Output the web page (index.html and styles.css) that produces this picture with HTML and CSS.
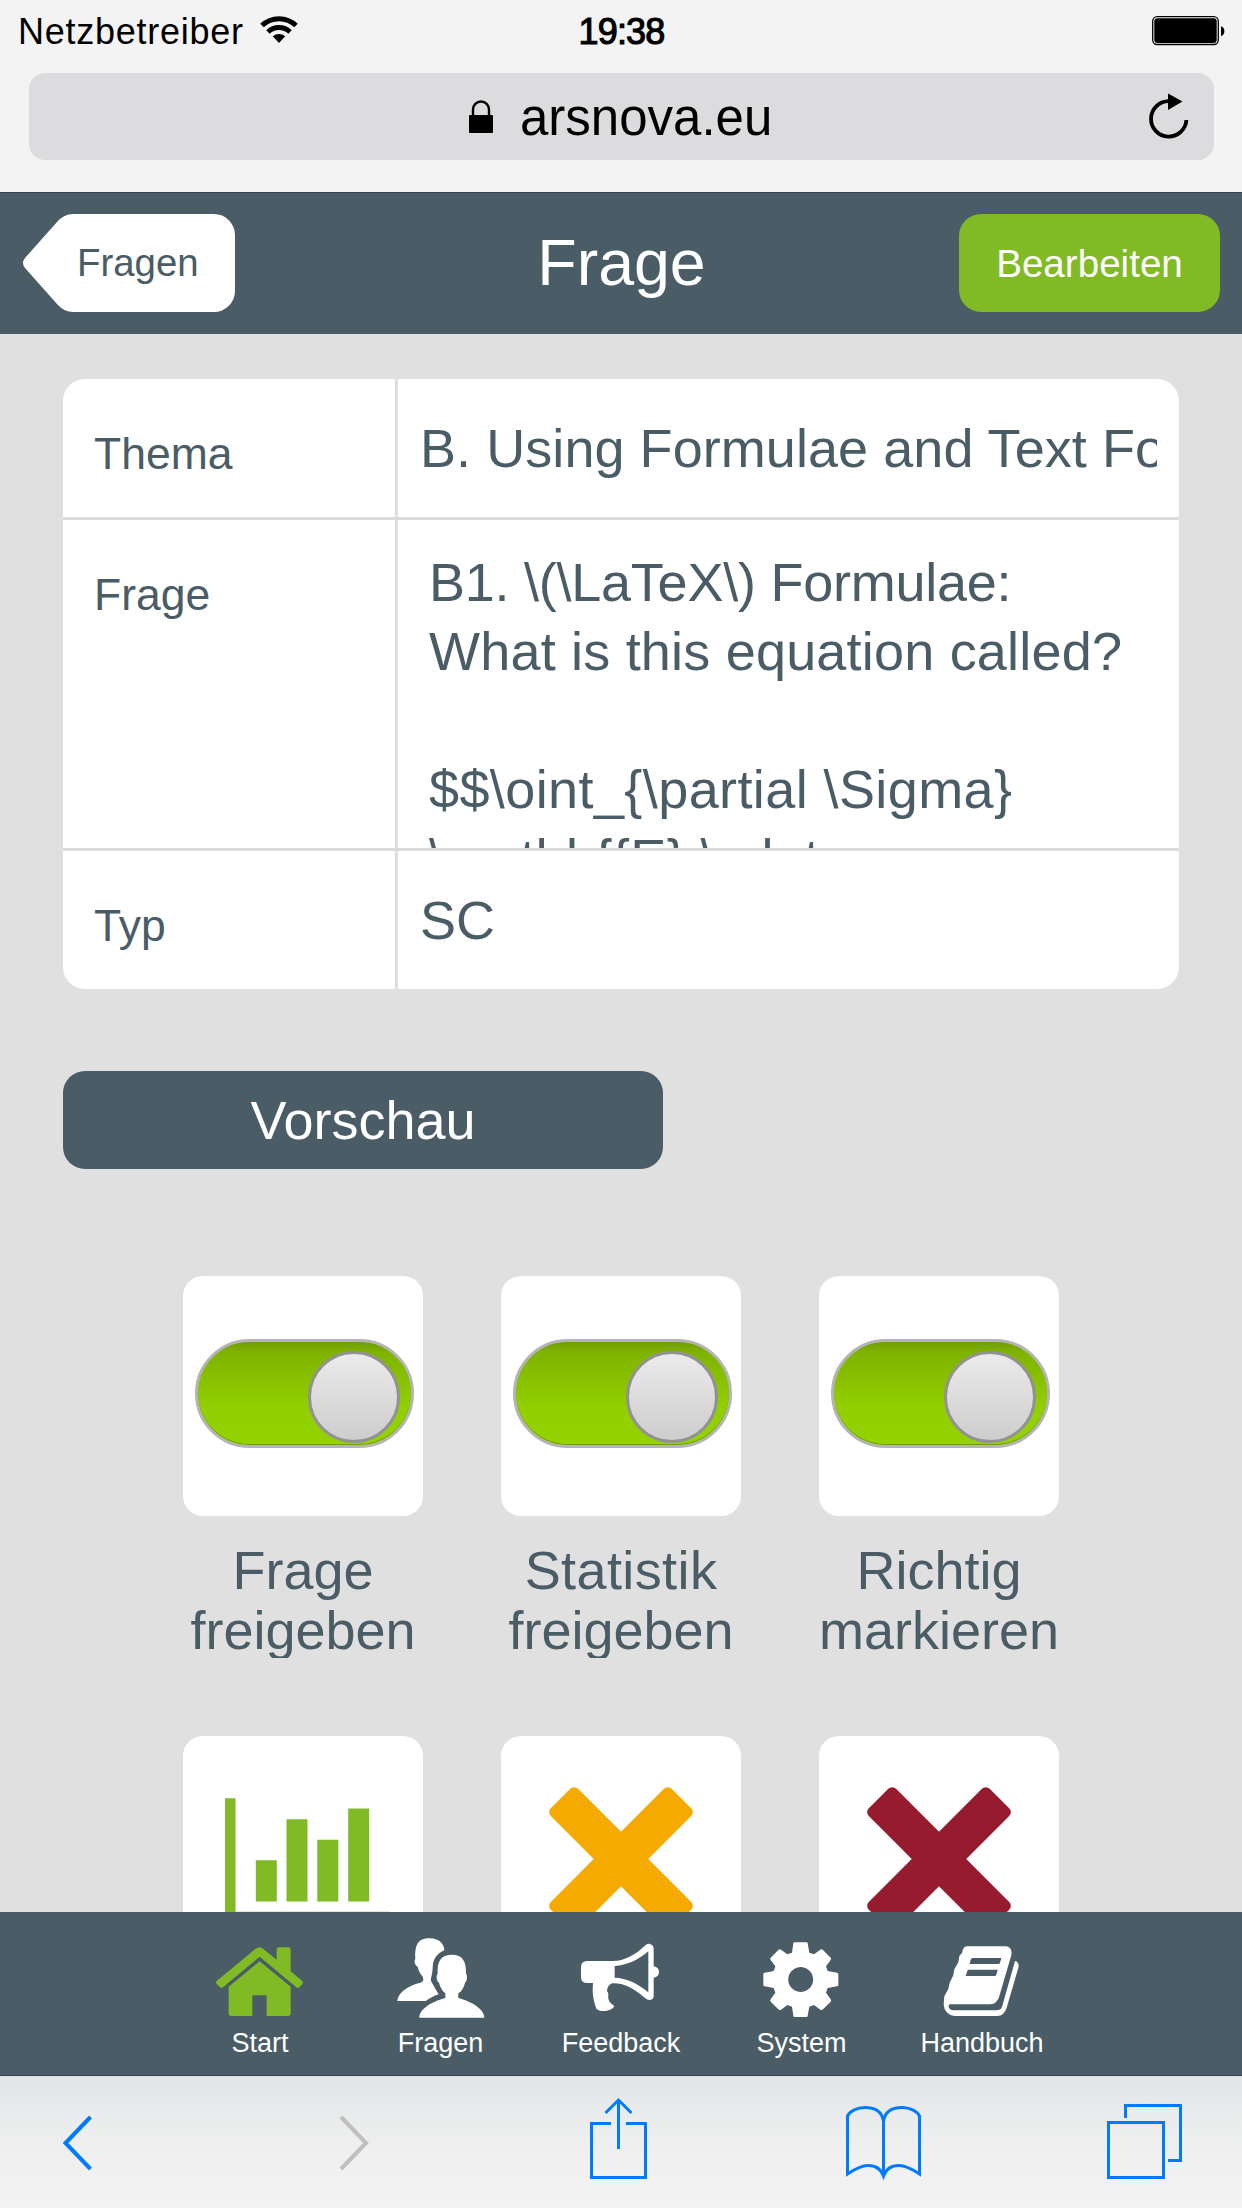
FILE: index.html
```html
<!DOCTYPE html>
<html lang="de">
<head>
<meta charset="utf-8">
<title>ARSnova – Frage</title>
<link rel="stylesheet" href="styles.css">
</head>
<body>
<div class="screen">
  <div class="chrome">
    <div class="status">
      <div class="carrier"><span>Netzbetreiber</span>
        <svg width="38" height="28" viewBox="0 0 38 28"><g fill="none" stroke="#000" stroke-width="5"><path d="M2 10.5a24.5 24.5 0 0 1 34 0"/><path d="M8 17a16 16 0 0 1 22 0"/></g><path d="M19 28l-6.2-6.7a9.2 9.2 0 0 1 12.4 0z"/></svg>
      </div>
      <div class="clock">19:38</div>
      <div class="battery"><svg width="74" height="30" viewBox="0 0 74 30"><rect x=".7" y=".7" width="65.6" height="27.8" rx="4.5" fill="none" stroke="#000" stroke-width="1.3"/><rect x="2.3" y="2.3" width="62.4" height="24.6" rx="3" /><path d="M69 10.2c4.5 1 4.5 8.8 0 9.8z"/></svg></div>
    </div>
    <div class="address">
      <svg class="lock" width="24" height="34" viewBox="0 0 24 34"><rect y="15" width="24" height="18" rx="1"/><path d="M4 16V9.5a8 8 0 0 1 16 0V16" fill="none" stroke="#000" stroke-width="2.4"/></svg>
      <span>arsnova.eu</span>
      <svg class="reload" width="40" height="46" viewBox="0 0 40 46"><path d="M37.4 27A17.7 17.7 0 1 1 19.5 8.200" fill="none" stroke="#000" stroke-width="3.8"/><path d="M19 0.500V17L33.5 8.5z"/></svg>
    </div>
  </div>

  <header class="titlebar">
    <div class="back">
      <svg width="212" height="98" viewBox="0 0 212 98"><path d="M50 0H191A21 21 0 0 1 212 21V77A21 21 0 0 1 191 98H50Q41 98 34 90L2 54Q-2 49 2 44L34 8Q41 0 50 0z" fill="#fff"/></svg>
      <span>Fragen</span>
    </div>
    <h1>Frage</h1>
    <div class="edit">Bearbeiten</div>
  </header>

  <main class="content">
    <div class="form">
      <div class="row"><div class="label">Thema</div><div class="value single">B. Using Formulae and Text Formatting</div></div>
      <div class="row tall"><div class="label">Frage</div><div class="value area"><span class="tight">B1. \(\LaTeX\) Formulae:</span>
<span class="loose">What is this equation called?</span>

<span class="wide">$$\oint_{\partial \Sigma}
\mathbf{E} \cdot</span></div></div>
      <div class="row last"><div class="label">Typ</div><div class="value single">SC</div></div>
    </div>
    <div class="preview">Vorschau</div>
    <div class="tiles">
      <div class="cell"><div class="tile"><div class="toggle"><i></i></div></div><p>Frage<br>freigeben</p></div>
      <div class="cell"><div class="tile"><div class="toggle"><i></i></div></div><p><span class="wide">Statistik</span><br>freigeben</p></div>
      <div class="cell"><div class="tile"><div class="toggle"><i></i></div></div><p>Richtig<br>markieren</p></div>
      <div class="cell"><div class="tile"><svg width="240" height="240" viewBox="0 0 240 240" fill="#80ba24"><path d="M42 62.3h10.500v113.500H206.500v10.500H42zM72.800 124.200h21v41.300h-21zM103.500 83.300h21v82.200h-21zM134.300 103.700h21v61.800h-21zM165.200 72.500h21v93h-21z"/></svg></div></div>
      <div class="cell"><div class="tile"><svg width="240" height="240" viewBox="0 0 240 240"><g transform="translate(120 123) rotate(45)" fill="#f4aa00"><rect x="-85.5" y="-19.3" width="171" height="38.6" rx="5.5"/><rect x="-19.3" y="-85.5" width="38.6" height="171" rx="5.5"/></g></svg></div></div>
      <div class="cell"><div class="tile"><svg width="240" height="240" viewBox="0 0 240 240"><g transform="translate(120 123) rotate(45)" fill="#971b2f"><rect x="-85.5" y="-19.3" width="171" height="38.6" rx="5.5"/><rect x="-19.3" y="-85.5" width="38.6" height="171" rx="5.5"/></g></svg></div></div>
    </div>
  </main>

  <nav class="tabs">
    <div class="tab"><svg width="96" height="86" viewBox="156 702 288 258" fill="#80ba24"><path d="M170 843L286 747Q298 737 310 747L350 779V749Q350 742 357 742H385Q392 742 392 749V814L426 842Q431 847 427 852L418 862Q414 866 409 862L299 770L189 862Q184 866 180 862L170 852Q166 847 170 843z"/><path d="M299 784L392 860V940Q392 948 384 948H320V886H277V948H214Q206 948 206 940V860z"/></svg><span>Start</span></div>
    <div class="tab"><svg width="96" height="86" viewBox="698 703 288 258" fill="#fff"><path d="M808 716C836 716 851 731 852 752C826 764 818 780 817 805C816 832 808 836 814 848C820 860 828 872 835 884C820 889 808 896 796 904H711C712 880 742 858 780 849C791 846 790 838 786 829C777 819 774 810 772 801C764 798 760 784 765 778C763 736 772 716 808 716z"/><path d="M875 765C906 765 918 783 917 822C922 827 921 844 914 849C911 862 905 874 894 881V895C938 907 972 930 972 954H777C777 930 810 907 855 895V881C846 874 839 862 836 849C828 844 827 827 832 822C830 783 843 765 875 765z"/></svg><span>Fragen</span></div>
    <div class="tab"><svg width="96" height="86" viewBox="9 12 288 258" fill="#fff"><path fill-rule="evenodd" d="M52 93H128C164 93 195 76 226 46Q232 40 240 42Q251 45 251 56V109Q267 112 267 126Q267 140 251 143V197Q251 208 240 210Q232 211 226 205C193 176 163 159 128 160C118 162 112 171 111 183Q116 189 115 195C113 207 118 219 133 228C126 244 90 248 79 236C69 211 66 185 69 159H52Q33 159 33 140V112Q33 93 52 93zM134 108V143C169 144 204 160 235 187V64C202 91 172 106 134 108z"/></svg><span>Feedback</span></div>
    <div class="tab"><svg width="96" height="86" viewBox="341 702 288 258" fill="#fff"><path fill-rule="evenodd" d="M463 727H499Q502 727 502 730L507 758L521 763L540 749Q544 746 548 750L571 773Q574 776 571 780L557 799L562 813L590 818Q594 819 594 823V855Q594 859 590 859L562 864L557 878L571 898Q574 902 571 905L548 928Q544 932 540 929L521 915L507 920L502 947Q502 951 498 951H463Q459 951 459 947L455 920L441 915L422 929Q418 932 414 928L391 905Q388 902 391 898L405 878L400 864L373 859Q369 859 369 855V823Q369 819 373 818L400 813L405 799L391 780Q388 776 391 773L414 750Q418 746 422 749L441 763L455 758L459 730Q459 727 463 727zM481 801a37.5 37.5 0 1 0 .1 0z"/></svg><span>System</span></div>
    <div class="tab"><svg width="96" height="86" viewBox="883 702 288 258" fill="#fff"><path fill-rule="evenodd" d="M981 739H1098Q1119 741 1115 766L1078 892Q1070 913 1052 913H931Q926 914 927 920Q929 930 942 931H1070Q1083 931 1087 921L1126 783Q1137 784 1137 800L1101 923Q1093 948 1073 948H944Q914 944 912 913L914 889L926 867L930 848L941 826L944 808L956 787L959 768L967 759Q970 740 981 739zM999 774Q995 774 993 779L990 792H1076Q1080 792 1081 788L1085 774zM988 809Q984 809 983 813L978 828H1065Q1069 828 1070 824L1074 809z"/></svg><span>Handbuch</span></div>
  </nav>

  <footer class="browserbar">
    <svg width="1242" height="132" viewBox="0 2076 1242 132" fill="none" stroke="#007aff" stroke-width="3">
      <path d="M90.5 2117L65.5 2143L90.5 2169" stroke-width="4"/>
      <path d="M341 2117L366 2143L341 2169" stroke="#bfbfbf" stroke-width="4"/>
      <path d="M611 2123.5H591.5V2177.5H645.5V2123.5H626M618.500 2101V2149M605.500 2113L618.500 2100L631.500 2113"/>
      <path d="M883.5 2176V2121C882 2112 875 2107.5 865 2107.5C857 2107.5 850 2111 847.5 2116V2174C855 2169 861 2165.5 868 2165.5C876 2165.5 881 2169 883.5 2176C886 2169 891 2165.5 899 2165.5C906 2165.5 912 2169 919.5 2174V2116C917 2111 910 2107.5 902 2107.5C892 2107.5 885 2112 883.5 2121"/>
      <path d="M1108.500 2122.500H1163.500V2177.500H1108.500zM1125.500 2118V2105.500H1180.500V2160.500H1168"/>
    </svg>
  </footer>
</div>
</body>
</html>
```
FILE: styles.css
```css
* { box-sizing: border-box; }
body {
  margin: 0;
  font-family: "Liberation Sans", Arial, sans-serif;
  color: #4a5c66;
  background: #e0e0e0;
}
svg { display: block; flex: none; }
h1, p { margin: 0; font-weight: 400; }
.screen {
  width: 1242px;
  height: 2208px;
  display: flex;
  flex-direction: column;
  overflow: hidden;
}

/* browser chrome */
.chrome {
  flex: none;
  height: 193px;
  background: #f3f3f3;
  border-bottom: 1px solid #33444d;
  color: #000;
}
.status {
  height: 73px;
  padding: 12px 17px 0 18px;
  display: grid;
  grid-template-columns: 1fr auto 1fr;
  align-items: start;
  font-size: 36px;
  line-height: 40px;
}
.carrier { display: flex; gap: 16px; letter-spacing: .75px; }
.carrier svg { margin-top: 3px; }
.clock { font-size: 36px; letter-spacing: -.8px; -webkit-text-stroke: 1.1px #000; }
.battery { justify-self: end; margin-top: 4px; }
.battery svg { margin-right: -1px; }
.address {
  height: 87px;
  margin: 0 28px 0 29px;
  padding: 0 25px 0 440px;
  border-radius: 16px;
  background: #dcdcde;
  display: flex;
  align-items: center;
  font-size: 51px;
}
.address span { padding-top: 2px; }
.lock { margin-right: 27px; }
.reload { margin-left: auto; margin-bottom: 2px; }

/* title bar */
.titlebar {
  flex: none;
  height: 141px;
  padding: 21px 22px 0 23px;
  background: #4a5c66;
  display: grid;
  grid-template-columns: 1fr auto 1fr;
  align-items: start;
  color: #fff;
}
.back { display: grid; width: 212px; color: #4a5c66; font-size: 38.4px; }
.back > * { grid-area: 1 / 1; }
.back span { align-self: center; padding-left: 54px; }
.titlebar h1 { font-size: 64.5px; line-height: 98px; }
.edit {
  justify-self: end;
  width: 261px;
  height: 98px;
  border-radius: 22px;
  background: #80ba24;
  font-size: 38.6px;
  line-height: 99px;
  text-align: center;
}

/* scrolled content */
.content { flex: 1; min-height: 0; overflow: hidden; padding: 45px 63px 0; }
.form { width: 1116px; height: 610px; border-radius: 22px; background: #fff; overflow: hidden; }
.row { display: flex; height: 141px; border-bottom: 3px solid #dcdcdc; }
.row.tall { height: 331px; }
.row.last { height: 138px; border: 0; }
.label {
  flex: none;
  width: 335px;
  padding: 50px 0 0 31px;
  border-right: 3px solid #dfdfdf;
  font-size: 44.5px;
  line-height: 50px;
}
.value { flex: 1; min-width: 0; font-size: 54px; overflow: hidden; white-space: pre; }
.single { padding-top: 39px; margin: 0 22px 0 22px; line-height: 60px; letter-spacing: .06px; }
.area { padding: 28px 0 0 31px; line-height: 69px; }
.tight { letter-spacing: -.25px; }
.loose { letter-spacing: .2px; }
.wide { letter-spacing: .4px; }
.preview {
  width: 600px;
  height: 98px;
  margin-top: 82px;
  border-radius: 22px;
  background: #4a5c66;
  color: #fff;
  font-size: 54px;
  line-height: 99px;
  text-align: center;
}
.tiles {
  margin: 107px 0 0 120px;
  display: grid;
  grid-template-columns: repeat(3, 240px);
  gap: 78px;
}
.tile {
  height: 240px;
  border-radius: 20px;
  background: #fff;
  display: flex;
  align-items: flex-start;
}
.toggle {
  width: 219px;
  height: 109px;
  margin: 63px 0 0 12px;
  padding: 9px 11px 0 0;
  border: 3px solid #b4b4b4;
  border-radius: 55px;
  background: linear-gradient(#6f9f00, #7fb300 10%, #92cf00 62%, #94d200);
  box-shadow: inset 0 -1px 0 #70a000;
  display: flex;
  justify-content: flex-end;
}
.toggle i {
  width: 92px;
  height: 92px;
  border: 3px solid #929292;
  border-radius: 50%;
  background: linear-gradient(#ebebeb, #cdcdcd);
}
.cell p {
  height: 118px;
  margin: 24px -20px 0;
  overflow: hidden;
  font-size: 54px;
  line-height: 60px;
  text-align: center;
}

/* app tabs */
.tabs {
  flex: none;
  height: 164px;
  background: #4a5c66;
  border-bottom: 1px solid #33444d;
  display: flex;
  justify-content: center;
  color: #fff;
}
.tab {
  width: 180.5px;
  padding-top: 22px;
  display: flex;
  flex-direction: column;
  align-items: center;
  font-size: 27px;
  line-height: 32px;
}
.tab span { margin-top: 7px; }

.browserbar {
  flex: none;
  height: 132px;
  background: linear-gradient(#e2e5e5, #e9ebec 28%, #f0f0f0 62%, #f3f3f3);
}
```
